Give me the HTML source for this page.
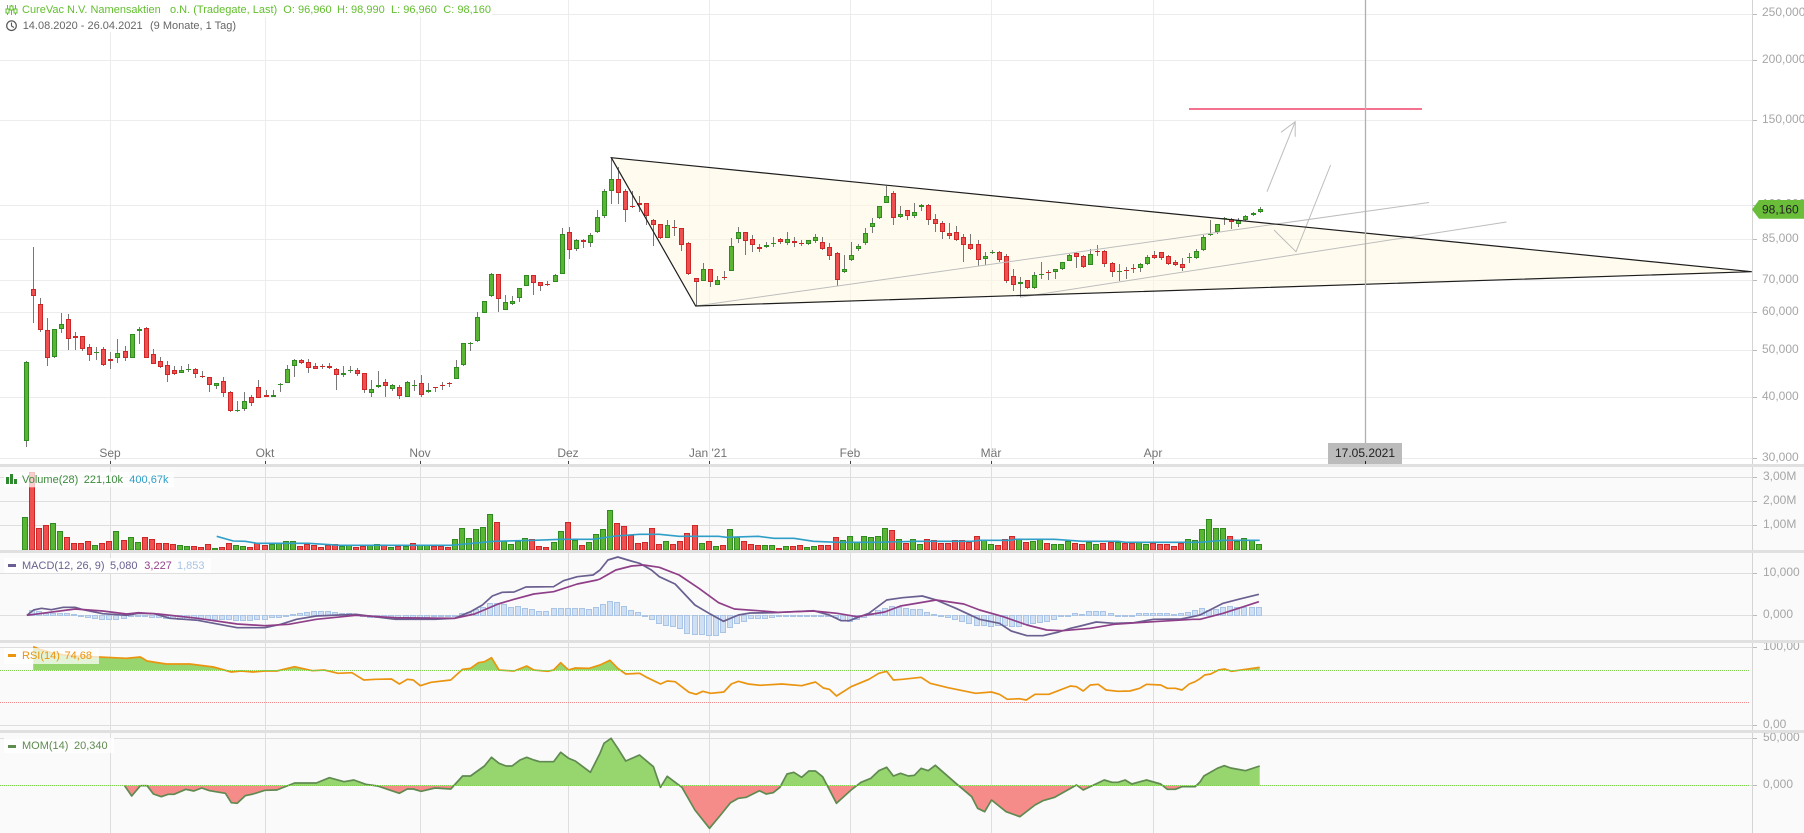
<!DOCTYPE html>
<html><head><meta charset="utf-8"><title>CureVac Chart</title>
<style>
html,body{margin:0;padding:0;background:#fff;width:1804px;height:833px;overflow:hidden}
svg{display:block;font-family:"Liberation Sans",Arial,sans-serif}
.ax{font-size:12px;fill:#a6a6a6}
.mo{font-size:12px;fill:#737373;text-anchor:middle}
.lg{font-size:11px}
</style></head><body>
<svg id="s" width="1804" height="833" viewBox="0 0 1804 833" xmlns="http://www.w3.org/2000/svg">
<defs>
<clipPath id="rsiTop"><rect x="0" y="643" width="1752" height="27.3"/></clipPath>
<clipPath id="momTop"><rect x="0" y="733" width="1752" height="52.7"/></clipPath>
<clipPath id="momBot"><rect x="0" y="785.7" width="1752" height="47.3"/></clipPath>
</defs>
<rect width="1804" height="833" fill="#fff"/>
<rect y="467" width="1804" height="366" fill="#fafafa"/>
<g id="grid" shape-rendering="crispEdges"></g>
<polygon points="611.3,157.7 1751.8,271.7 695.7,306" fill="#fff9e0" fill-opacity=".5"/>
<g id="cand" shape-rendering="crispEdges"></g>
<g fill="none" stroke="#bdbdbd" stroke-width="1">
<polyline points="695.7,306 1429,202.5"/>
<polyline points="1020,297.3 1506.5,222"/>
<polyline points="1267,191.7 1295.2,121.7"/>
<polyline points="1281,132.3 1295.2,121.7 1295.2,136.7"/>
<polyline points="1274,230 1296,251.7 1330.6,165"/>
</g>
<g fill="none" stroke="#1e1e1e" stroke-width="1.2">
<polygon points="611.3,157.7 1751.8,271.7 695.7,306"/>
</g>
<line x1="1189" y1="109" x2="1422" y2="109" stroke="#f0446c" stroke-width="1.4"/>
<line x1="1365.5" y1="0" x2="1365.5" y2="444" stroke="#b0b0b0" stroke-width="1.3"/>
<rect x="1328" y="443" width="74" height="21" fill="#bbb"/>
<text x="1365" y="457" font-size="12" fill="#222" text-anchor="middle">17.05.2021</text>
<rect x="1365" y="461" width="1" height="3" fill="#222"/>

<g id="vol" shape-rendering="crispEdges"></g>
<polyline id="volma" fill="none" stroke="#2f9fc8" stroke-width="1.6" stroke-linejoin="round"/>
<g id="hist" shape-rendering="crispEdges"></g>
<polyline id="macd" fill="none" stroke="#6a5f90" stroke-width="1.7" stroke-linejoin="round"/>
<polyline id="sig" fill="none" stroke="#8f3f88" stroke-width="1.7" stroke-linejoin="round"/>
<polygon id="rsif" fill="#97d56f" clip-path="url(#rsiTop)"/>
<polyline id="rsi" fill="none" stroke="#ea9410" stroke-width="1.7" stroke-linejoin="round"/>
<polygon id="momf1" fill="#97d56f" clip-path="url(#momTop)"/>
<polygon id="momf2" fill="#f58c8a" clip-path="url(#momBot)"/>
<polyline id="mom" fill="none" stroke="#5f8a50" stroke-width="1.7" stroke-linejoin="round"/>
<g stroke-dasharray="1 1" stroke-width="1" shape-rendering="crispEdges">
<line x1="0" x2="1750" y1="670.5" y2="670.5" stroke="#7fd14f"/>
<line x1="0" x2="1750" y1="702.5" y2="702.5" stroke="#f58a8a"/>
<line x1="0" x2="1750" y1="785.5" y2="785.5" stroke="#7fd14f"/>
</g>

<!-- header -->
<rect x="0" y="0" width="492" height="17" fill="#fff"/>
<rect x="0" y="17" width="240" height="15" fill="#fff"/>
<g fill="none" stroke="#62bf2e" stroke-width="1">
<line x1="7.500" y1="5" x2="7.500" y2="15"/><rect x="6" y="9" width="3" height="4" fill="#fff"/>
<line x1="11.500" y1="5" x2="11.500" y2="15"/><rect x="10" y="6" width="3" height="4" fill="#fff"/>
<line x1="15.500" y1="5" x2="15.500" y2="15"/><rect x="14" y="9" width="3" height="4" fill="#fff"/>
</g>
<g font-size="11" fill="#62bf2e">
<text x="22" y="13">CureVac N.V. Namensaktien</text>
<text x="170" y="13">o.N. (Tradegate, Last)</text>
<text x="283.3" y="13">O: 96,960</text>
<text x="337" y="13">H: 98,990</text>
<text x="391" y="13">L: 96,960</text>
<text x="443.3" y="13">C: 98,160</text>
</g>
<circle cx="11.5" cy="25.7" r="4.8" fill="none" stroke="#555" stroke-width="1.2"/>
<path d="M11.5 22.5V26L14 27.5" fill="none" stroke="#555" stroke-width="1.1"/>
<g font-size="11" fill="#666">
<text x="22.7" y="29">14.08.2020 - 26.04.2021</text>
<text x="150" y="29">(9 Monate, 1 Tag)</text>
</g>

<!-- month labels -->
<text class="mo" x="110" y="457">Sep</text>
<text class="mo" x="265" y="457">Okt</text>
<text class="mo" x="420" y="457">Nov</text>
<text class="mo" x="568" y="457">Dez</text>
<text class="mo" x="708" y="457">Jan '21</text>
<text class="mo" x="850" y="457">Feb</text>
<text class="mo" x="991" y="457">Mär</text>
<text class="mo" x="1153" y="457">Apr</text>

<!-- legends -->
<rect x="4" y="471.7" width="170" height="15.6" fill="#fff" fill-opacity=".72"/>
<rect x="4" y="558" width="207" height="15" fill="#fff" fill-opacity=".8"/>
<rect x="4" y="648" width="95" height="16" fill="#fff" fill-opacity=".72"/>
<rect x="4" y="737.7" width="110" height="15.3" fill="#fff" fill-opacity=".8"/>
<g fill="#2f8a2f" shape-rendering="crispEdges">
<rect x="6" y="477" width="3" height="7"/><rect x="10" y="474" width="3" height="10"/><rect x="14" y="479" width="3" height="5"/>
</g>
<rect x="8" y="564" width="8" height="3" fill="#6a5f90"/>
<rect x="8" y="654" width="8" height="3" fill="#ea9410"/>
<rect x="8" y="745" width="8" height="3" fill="#5f8a50"/>
<g class="lg">
<text x="22" y="483" fill="#3d8a3d">Volume(28)</text>
<text x="83.8" y="483" fill="#3d8a3d">221,10k</text>
<text x="129.3" y="483" fill="#2f9fc8">400,67k</text>
<text x="22" y="569" fill="#6a5f90">MACD(12, 26, 9)</text>
<text x="110" y="569" fill="#6a5f90">5,080</text>
<text x="144.3" y="569" fill="#95418a">3,227</text>
<text x="177" y="569" fill="#a9c4e4">1,853</text>
<text x="22" y="659" fill="#ea9410">RSI(14)</text>
<text x="64.5" y="659" fill="#ea9410">74,68</text>
<text x="22" y="749" fill="#5f8a50">MOM(14)</text>
<text x="74" y="749" fill="#5f8a50">20,340</text>
</g>

<!-- axis -->
<rect x="1752" y="0" width="1" height="833" fill="#d4d4d4"/>
<g id="ticks" shape-rendering="crispEdges"></g>
<g class="ax">
<text x="1762" y="16">250,000</text>
<text x="1762" y="63">200,000</text>
<text x="1762" y="123">150,000</text>
<text x="1762" y="207.500">100,000</text>
<text x="1762" y="242">85,000</text>
<text x="1762" y="283">70,000</text>
<text x="1762" y="315">60,000</text>
<text x="1762" y="353">50,000</text>
<text x="1762" y="400">40,000</text>
<text x="1762" y="461">30,000</text>
<text x="1763" y="480">3,00M</text>
<text x="1763" y="504">2,00M</text>
<text x="1763" y="528">1,00M</text>
<text x="1763" y="576">10,000</text>
<text x="1763" y="618">0,000</text>
<text x="1763" y="650">100,00</text>
<text x="1763" y="728">0,00</text>
<text x="1763" y="741">50,000</text>
<text x="1763" y="788">0,000</text>
</g>
<polygon points="1752,209.5 1759,200 1804,200 1804,218.7 1759,218.7" fill="#69bd38"/>
<text x="1762" y="213.500" font-size="12" fill="#222">98,160</text>

<!-- separators -->
<g fill="#e0e0e0" shape-rendering="crispEdges">
<rect y="464" width="1804" height="3"/>
<rect y="550" width="1804" height="3"/>
<rect y="640" width="1804" height="3"/>
<rect y="730" width="1804" height="3"/>
</g>
</svg>
<script>
(function(){
var $=function(id){return document.getElementById(id)};
var VX=[110,265,420,568,709,850,991,1153];
var H=[14,60,120,205,239,280,312,350,397,458];
var SUB=[477,501,525,573,615,647,725,738,785];
var g='';
H.forEach(function(y){g+='<rect x="0" y="'+y+'" width="1752" height="1" fill="#ececec"/>'});
VX.forEach(function(x){g+='<rect x="'+x+'" y="0" width="1" height="464" fill="#ececec"/>';
 g+='<rect x="'+x+'" y="467" width="1" height="366" fill="#dedede"/>';
 g+='<rect x="'+x+'" y="461" width="1" height="3" fill="#444"/>'});
SUB.forEach(function(y){g+='<rect x="0" y="'+y+'" width="1752" height="1" fill="#dedede"/>'});
$('grid').innerHTML=g;
var t='';
H.concat(SUB).forEach(function(y){t+='<rect x="1753" y="'+y+'" width="4" height="1" fill="#bbb"/>'});
$('ticks').innerHTML=t;

var C=[[1,1087,1323,1083,1340],[0,868,889,741,970],[0,913,991,895,995],[0,991,1075,955,1097],[1,988,1070,988,1075],[1,973,988,940,1000],[0,958,1018,943,1050],[0,1009,1013,997,1050],[0,1009,1048,1009,1052],[0,1042,1066,1033,1082],
[1,1056,1060,1042,1080],[0,1048,1096,1040,1097],[0,1078,1082,1057,1108],[1,1060,1075,1018,1090],[0,1054,1075,1038,1082],[1,1003,1075,1003,1075],[1,988,994,982,1032],[0,985,1075,982,1075],[0,1063,1093,1048,1093],[0,1084,1100,1072,1103],
[0,1096,1126,1084,1145],[0,1111,1123,1098,1124],[1,1111,1120,1098,1120],[1,1108,1110,1092,1115],[0,1108,1123,1103,1133],[0,1129,1132,1114,1135],[0,1132,1156,1130,1175],[1,1150,1159,1148,1168],[0,1144,1180,1132,1190],[0,1177,1234,1172,1235],
[1,1231,1233,1203,1235],[1,1204,1228,1176,1232],[0,1192,1210,1186,1218],[0,1162,1195,1140,1195],[0,1186,1192,1170,1192],[1,1186,1192,1170,1192],[1,1153,1156,1150,1175],[1,1108,1150,1095,1150],[1,1081,1099,1078,1130],[0,1081,1090,1078,1093],
[0,1087,1105,1078,1118],[0,1099,1108,1090,1108],[0,1099,1102,1093,1108],[0,1099,1105,1090,1106],[0,1108,1126,1105,1170],[1,1120,1126,1098,1130],[1,1111,1114,1098,1120],[0,1111,1123,1104,1128],[0,1120,1171,1118,1180],[1,1168,1180,1140,1190],
[1,1156,1162,1112,1165],[0,1147,1159,1137,1190],[1,1156,1168,1152,1172],[0,1162,1189,1155,1198],[1,1147,1192,1144,1192],[1,1155,1157,1140,1172],[0,1150,1186,1125,1190],[1,1171,1175,1150,1178],[0,1162,1165,1160,1175],[0,1155,1157,1147,1170],[0,1150,1153,1145,1160]];
var D=[[1,712,748,690,748],[1,640,705,640,707],[1,638,640,635,662],[1,562,632,547,636],[1,514,550,512,550],[1,433,497,430,500],[0,433,508,433,545],[1,517,539,495,541],[1,514,523,498,524],
[1,475,505,475,516],[1,436,469,436,469],[0,436,460,436,494],[0,457,469,457,484],[0,463,466,453,469],[1,436,457,433,457],[1,313,433,295,433],[0,307,361,292,387],[1,331,358,328,362],[0,331,337,328,353],
[1,316,340,310,351],[1,262,307,240,309],[1,184,259,178,263],[1,148,184,85,222],[0,148,190,112,222],[0,184,241,178,276],[0,229,232,184,235],[0,220,226,197,245],[0,220,257,220,285],[0,271,286,268,348],
[0,283,325,283,328],[1,286,325,270,325],[0,292,295,270,318],[0,295,346,295,362],[0,340,431,337,435],[0,445,457,445,528],[1,418,454,400,454],[0,418,457,418,471],[1,451,466,438,466],[0,442,445,424,450],
[1,349,424,325,424],[1,307,328,292,338],[0,307,334,307,375],[0,328,346,316,366],[0,352,358,343,366],[1,346,352,337,355],[1,340,343,322,352],[0,328,337,325,343],[1,328,340,307,344],[0,334,340,322,350],
[0,340,343,331,348],[1,331,343,331,345],[1,322,334,313,339],[0,337,358,322,360],[0,352,379,340,390],[0,370,451,367,469],[1,418,427,376,430],[1,376,391,337,394],[1,349,358,343,364],[1,310,340,295,345],
[1,280,292,265,308],[1,229,265,229,266],[1,199,220,167,220],[0,190,265,184,285],[1,253,262,229,265],[0,241,259,241,270],[1,247,259,220,265],[1,226,232,222,243],[0,226,271,223,285],[0,268,283,253,306],
[0,280,307,274,328],[0,310,319,280,326],[0,307,331,289,333],[0,322,346,313,396],[0,343,358,313,360],[0,343,391,331,408],[1,379,388,367,405],[1,367,370,361,372],[0,367,391,364,395],[0,379,454,373,460],
[0,439,466,418,483],[1,457,463,442,500],[0,451,475,451,478],[1,436,475,427,478],[1,433,436,397,447],[0,427,430,421,450],[1,418,427,418,447],[1,397,418,397,421],[1,376,394,373,394],[0,370,382,367,415],
[0,379,412,376,413],[1,373,406,358,406],[0,364,366,345,377],[0,364,403,361,410],[0,400,427,397,441],[1,424,427,403,453],[0,421,423,411,447],[0,414,416,403,429],[1,403,415,400,427],[1,382,403,376,404],
[0,376,385,364,386],[0,367,385,367,390],[0,379,403,376,404],[0,397,406,391,408],[0,403,415,385,423],[1,381,383,370,399],[1,364,385,358,386],[1,322,361,314,362],[1,312,315,271,317],[1,283,307,283,313],
[1,265,268,262,285],[0,268,277,265,297],[1,271,283,265,290],[1,259,270,256,274],[1,250,256,247,258],[1,238,247,232,249]];
D.forEach(function(a){C.push([a[0],a[1]+390,a[2]+390,a[3]+390,a[4]+390])});
function cx(i){return 26.3+7.05*i}
var h='';
C.forEach(function(a,i){
 var x=Math.floor(cx(i)),gr=a[0];
 var wt=Math.round(a[3]/3),wb=Math.round(a[4]/3);
 h+='<rect x="'+x+'" y="'+wt+'" width="1" height="'+Math.max(1,wb-wt)+'" fill="#777"/>';
 var t=Math.round(a[1]/3),b=Math.round(a[2]/3);
 if(b-t<2){h+='<rect x="'+(x-2)+'" y="'+t+'" width="5" height="1" fill="'+(gr?'#2f8f22':'#c82525')+'"/>';}
 else h+='<rect x="'+(x-1.5)+'" y="'+(t+.5)+'" width="4" height="'+(b-t-1)+'" fill="'+(gr?'#5ab632':'#f04f4f')+'" stroke="'+(gr?'#2f8a22':'#cc2626')+'"/>';
});
$('cand').innerHTML=h;

var V=[[1,170],[0,35],[0,205],[0,196],[1,190],[1,214],[0,232],[0,250],[0,250],[0,244],[1,256],[0,250],[0,244],[1,214],[0,241],[1,232],[1,247],[0,232],[0,238],[0,250],[0,250],[0,253],[1,256],[1,259],[0,259],[0,262],[0,253],[1,265],[0,262],[0,250],[1,256],[1,259],[0,262],[0,250],[0,256],[1,253],[1,250],[1,244],[1,244],[0,259],[0,253],[0,256],[0,262],[0,256],[0,253],[1,258],[1,256],[0,262],[0,258],[1,256],[1,253],[0,256],[1,262],[0,259],[1,258],[0,250],[1,256],[1,256],[0,259],[0,259],[0,262],[1,238],[1,205],[1,235],[1,208],[1,202],[1,163],[0,187],[1,244],[1,253],[1,244],[1,235],[0,238],[0,259],[0,262],[1,247],[1,214],[0,187],[1,241],[0,256],[1,247],[1,223],[1,208],[1,151],[0,190],[0,199],[0,226],[0,250],[0,247],[0,205],[0,253],[1,244],[0,253],[0,244],[0,220],[0,196],[1,250],[0,244],[1,259],[0,256],[1,208],[1,232],[0,244],[0,253],[0,256],[1,256],[1,256],[0,265],[1,259],[0,259],[0,256],[1,262],[1,259],[0,256],[0,256],[0,232],[1,241],[1,229],[1,247],[1,229],[1,232],[1,229],[1,205],[0,211],[1,238],[0,250],[1,238],[1,253],[0,238],[0,241],[0,250],[0,250],[0,241],[0,241],[0,247],[0,229],[1,241],[1,253],[0,256],[0,238],[0,229],[1,238],[0,247],[1,244],[1,238],[0,250],[1,253],[1,253],[1,244],[0,250],[0,253],[1,247],[1,253],[0,250],[0,247],[1,247],[0,250],[0,250],[1,247],[1,253],[0,250],[0,253],[0,253],[0,259],[0,250],[1,238],[1,241],[1,208],[1,178],[1,205],[1,205],[0,229],[1,244],[1,235],[1,241],[1,253]];
h='';
V.forEach(function(a,i){var x=Math.floor(cx(i))-3.5,t=Math.round(460+a[1]/3)+.5;
 h+='<rect x="'+x+'" y="'+t+'" width="5" height="'+Math.max(1,550-t)+'" fill="'+(a[0]?'#5ab632':'#f04f4f')+'" stroke="'+(a[0]?'#2f8a22':'#cc2626')+'"/>'});
$('vol').innerHTML=h;

var M=[466,450,452,458,458,458,460,462,466,471,475,476,476,476,474,468,466,468,470,472,473,474,476,476,476,477,476,476,476,478,479,479,479,478,476,472,470,468,462,458,455,454,454,454,456,458,460,462,466,470,470,471,470,470,470,470,470,470,468,468,468,466,458,455,447,440,428,430,433,440,438,445,448,454,454,445,445,445,445,445,448,440,433,424,427,439,451,457,466,478,490,494,498,505,518,523,523,526,524,517,502,488,482,474,475,475,471,468,466,466,466,466,466,464,466,472,480,482,478,472,460,450,445,438,440,444,447,448,457,462,466,470,476,484,490,494,495,498,496,494,498,498,492,490,485,482,476,468,464,458,461,454,454,454,460,464,464,464,460,458,458,460,460,463,460,456,450,445,451,448,442,439,440,440,442,442];
h='';
M.forEach(function(v,i){if(i==0)return;var x=Math.floor(cx(i))-3.5,y=Math.round(460+v/3),b=615;
 var a=Math.min(y,b),e=Math.max(y,b);
 h+='<rect x="'+x+'" y="'+(a+.5)+'" width="5" height="'+Math.max(1,e-a)+'" fill="#cfe0f5" stroke="#a9c4e4"/>'});
$('hist').innerHTML=h;

function P(a,b,c){var o=[];
 function add(l,x0,sx,f){for(var i=0;i<l.length;i+=2){var x=x0+l[i]/sx;if(f(x))o.push([x,460+l[i+1]/3])}}
 add(a,0,2.529,function(x){return x<600});
 add(b,600,2.529,function(x){return x>=600&&x<1200});
 add(c,1200,2.596,function(x){return x>=1200});
 return o}
function S(p){return p.map(function(q){return q[0].toFixed(1)+','+q[1].toFixed(1)}).join(' ')}

var vm=P([548,229,590,243,620,244,650,250,780,250,860,256,1000,256,1140,256,1250,244,1350,241,1420,238,1500,238],
 [0,235,40,228,100,223,150,223,200,229,300,229,320,232,400,229,440,235,490,235,540,244,600,247,700,247,800,244,940,244,960,241,1040,241,1050,238,1150,238,1220,244,1310,244,1330,247,1510,247],
 [0,247,60,241,155,241]);
$('volma').setAttribute('points',S(vm));

$('macd').setAttribute('points',S(P([68,466,85,450,105,445,130,449,160,442,190,442,210,449,260,461,320,466,350,460,390,461,430,475,500,481,600,503,670,503,710,493,750,478,800,468,900,463,1000,478,1100,478,1150,475,1190,455,1220,435,1245,408,1270,397,1300,396,1330,381,1400,380,1425,362,1460,350,1500,345],
 [0,330,20,300,45,291,70,300,100,310,130,330,150,350,190,372,240,435,280,463,312,484,350,465,380,459,440,458,540,452,580,465,610,482,630,482,680,460,725,420,765,413,815,408,850,420,900,445,960,478,1010,490,1040,513,1080,527,1120,527,1160,516,1190,505,1215,498,1255,486,1300,490,1350,488,1400,478,1470,477,1510,467],
 [0,465,60,430,100,418,153,403])));
$('sig').setAttribute('points',S(P([68,466,190,447,260,453,320,462,350,458,400,462,500,475,600,492,670,497,730,493,800,478,900,466,1000,473,1150,475,1200,462,1260,432,1300,418,1350,402,1400,395,1460,372,1510,360],
 [0,357,40,330,80,318,110,315,150,322,200,345,250,385,300,428,340,447,400,452,450,457,540,453,600,460,650,470,720,456,760,438,850,420,920,432,960,450,1020,470,1080,495,1130,510,1170,512,1240,505,1300,493,1400,485,1500,478],
 [0,478,60,460,153,425])));

var r=P([84,560,100,568,130,578,160,585,200,589,250,591,320,595,355,591,372,603,420,612,480,612,540,621,585,636,610,633,640,636,670,633,700,633,745,620,790,632,820,630,855,640,890,638,920,660,950,658,990,657,1010,672,1030,658,1045,660,1063,677,1090,667,1140,660,1170,628,1190,625,1210,608,1225,605,1243,593,1262,630,1300,633,1332,618,1350,630,1385,634,1400,630,1418,608,1438,630,1455,624,1490,625],
 [0,615,25,601,45,625,65,642,100,640,120,653,153,672,170,663,190,665,225,697,243,703,260,694,280,700,313,696,332,672,350,664,375,672,405,676,460,672,510,677,545,666,565,684,580,688,598,708,635,680,680,658,705,640,725,634,742,660,765,658,812,652,835,670,880,683,950,700,990,696,1010,703,1030,718,1060,716,1078,720,1100,703,1135,703,1190,678,1205,680,1222,693,1240,675,1260,673,1280,690,1310,694,1340,693,1365,685,1382,673,1418,675,1435,685,1455,685,1472,690,1490,672,1505,665],
 [0,656,12,645,28,642,48,630,64,627,82,634,155,622]);
$('rsi').setAttribute('points',S(r));
var rf=r.slice();rf.push([r[r.length-1][0],670.3]);rf.push([r[0][0],670.3]);
$('rsif').setAttribute('points',S(rf));

var m=P([315,977,333,1008,355,977,372,977,388,1002,408,1010,425,1003,440,1003,470,988,490,993,510,984,530,992,570,1000,585,1028,600,1030,620,1007,640,1002,670,991,700,990,745,969,800,969,833,953,870,965,895,960,925,973,955,978,1010,1000,1030,987,1045,987,1065,994,1100,984,1140,987,1170,948,1190,948,1225,918,1243,892,1262,910,1280,918,1295,918,1315,900,1332,892,1350,900,1365,905,1400,905,1418,877,1438,895,1455,903,1493,937],
 [0,880,10,850,28,835,45,865,65,903,100,885,135,920,153,982,170,949,207,982,240,1050,277,1105,305,1065,330,1028,350,1015,370,1012,403,992,420,1002,438,998,455,982,473,942,490,937,510,952,528,933,545,933,563,950,598,1030,635,990,660,967,685,955,705,932,725,922,742,948,760,940,780,948,795,946,812,925,830,932,848,916,900,970,940,1010,955,1045,973,1055,990,1020,1027,1055,1062,1070,1100,1035,1120,1022,1150,1012,1205,975,1222,990,1275,960,1295,967,1310,967,1328,960,1345,972,1382,960,1418,972,1435,988,1455,988,1472,980,1505,980],
 [0,966,10,948,45,925,63,917,80,924,118,932,155,918]);
$('mom').setAttribute('points',S(m));
var mf=m.slice();mf.push([m[m.length-1][0],785.7]);mf.push([m[0][0],785.7]);
$('momf1').setAttribute('points',S(mf));$('momf2').setAttribute('points',S(mf));
})();
</script>
</body></html>
